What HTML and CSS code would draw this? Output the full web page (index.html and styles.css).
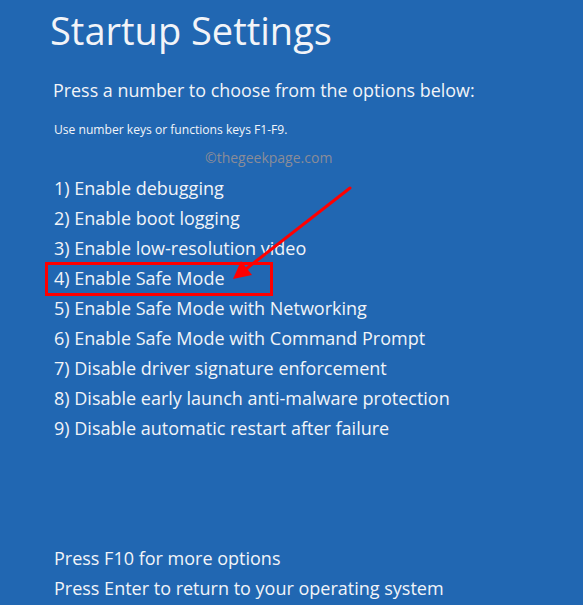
FILE: index.html
```html
<!DOCTYPE html>
<html>
<head>
<meta charset="utf-8">
<link rel="stylesheet" href="styles.css">
</head>
<body>
<main class="screen">
  <h1 class="title">Startup Settings</h1>
  <p class="lead">Press a number to choose from the options below:</p>
  <p class="hint">Use number keys or functions keys F1-F9.</p>
  <p class="watermark">©thegeekpage.com</p>
  <ol class="options">
    <li>1) Enable debugging</li>
    <li>2) Enable boot logging</li>
    <li>3) Enable low-resolution video</li>
    <li class="marked">4) Enable Safe Mode</li>
    <li>5) Enable Safe Mode with Networking</li>
    <li>6) Enable Safe Mode with Command Prompt</li>
    <li>7) Disable driver signature enforcement</li>
    <li>8) Disable early launch anti-malware protection</li>
    <li>9) Disable automatic restart after failure</li>
  </ol>
  <div class="footer">
    <p>Press F10 for more options</p>
    <p>Press Enter to return to your operating system</p>
  </div>
  <svg class="arrow" width="583" height="605" viewBox="0 0 583 605">
    <line x1="350" y1="188" x2="246" y2="269" stroke="#f00" stroke-width="3" stroke-linecap="round"/>
    <polygon points="233,279 241,261 252,275" fill="#f00"/>
  </svg>
</main>
</body>
</html>
```
FILE: styles.css
```css
html, body {
  margin: 0;
  padding: 0;
  background: #2167b2;
}
.screen {
  position: relative;
  width: 583px;
  height: 605px;
  overflow: hidden;
  font-family: "Open Sans", "Noto Sans", sans-serif;
  color: #f2f4f8;
  background: #2167b2;
}
.title {
  margin: 0;
  padding: 4px 0 0 50px;
  font-size: 38px;
  font-weight: 400;
  line-height: 52px;
}
.lead {
  margin: 19px 0 0 53px;
  font-size: 17.9px;
  line-height: 30px;
}
.hint {
  margin: 15px 0 0 54px;
  font-size: 12.1px;
  line-height: 20px;
}
.watermark {
  margin: 8px 0 0 205px;
  font-size: 14px;
  line-height: 20px;
  color: #8a8c98;
}
.options {
  list-style: none;
  margin: 5px 0 0 0;
  padding: 0 0 0 54px;
}
.options li {
  font-size: 18px;
  line-height: 30px;
  height: 30px;
}
.marked {
  position: relative;
}
.marked::before {
  content: "";
  position: absolute;
  left: -9px;
  top: -1px;
  width: 222px;
  height: 28px;
  border: 3px solid #f00;
}
.footer {
  margin: 100px 0 0 54px;
}
.footer p {
  margin: 0;
  font-size: 18px;
  line-height: 30px;
}
.arrow {
  position: absolute;
  left: 0;
  top: 0;
  pointer-events: none;
}
```
